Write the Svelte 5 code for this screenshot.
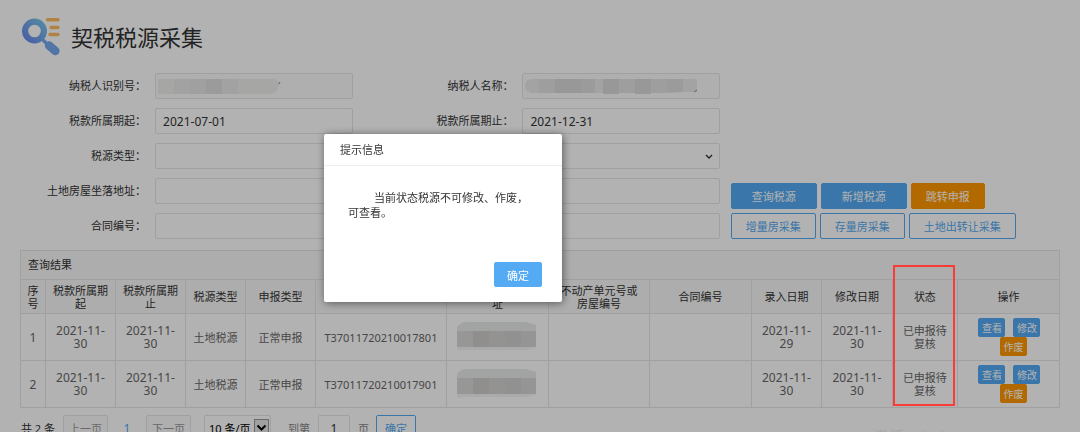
<script>
  let source = $state('');
  let address = $state('');
  let contract = $state('');
  let dateFrom = $state('2021-07-01');
  let dateTo = $state('2021-12-31');
  let pageSize = $state('10');
  let pageNo = $state('1');
  let showDialog = $state(true);

  const columns = [
    { name: '序号', width: 25 },
    { name: '税款所属期起', width: 70 },
    { name: '税款所属期止', width: 70 },
    { name: '税源类型', width: 60 },
    { name: '申报类型', width: 70 },
    { name: '税源编号', width: 131 },
    { name: '土地房屋坐落地址', width: 102, wide: true },
    { name: '不动产单元号或房屋编号', width: 101, wide: true },
    { name: '合同编号', width: 102 },
    { name: '录入日期', width: 70 },
    { name: '修改日期', width: 71 },
    { name: '状态', width: 65 },
    { name: '操作', width: 102 },
  ];
  const total = columns.reduce((sum, c) => sum + c.width, 0);

  const rows = [
    { id: 1, from: '2021-11-30', to: '2021-11-30', code: 'T37011720210017801', created: '2021-11-29', updated: '2021-11-30' },
    { id: 2, from: '2021-11-30', to: '2021-11-30', code: 'T37011720210017901', created: '2021-11-30', updated: '2021-11-30' },
  ];
</script>

<div class="page">
  <header>
    <svg width="38" height="38" viewBox="0 0 38 38" aria-hidden="true">
      <defs>
        <linearGradient id="lens" x1="0" y1="1" x2="1" y2="0">
          <stop offset="0" stop-color="#6a88ee" />
          <stop offset="1" stop-color="#78c4e8" />
        </linearGradient>
      </defs>
      <circle cx="12.5" cy="13" r="9.4" fill="none" stroke="url(#lens)" stroke-width="6.2" />
      <path d="M20 21l5 5" stroke="#74a8ec" stroke-width="3.4" />
      <path d="M27 27.5l6.4 5.5" stroke="#74a8ec" stroke-width="8.4" stroke-linecap="round" />
      <path d="M25.5 1.8H36M29 9.5h7M28 16.5h8" stroke="#fcbc62" stroke-width="3.4" stroke-linecap="round" />
    </svg>
    <h1>契税税源采集</h1>
  </header>

  <form class="query" onsubmit={(e) => e.preventDefault()}>
    <label for="taxNo">纳税人识别号：</label>
    <div class="field">
      <input id="taxNo" type="text" readonly />
      <svg class="mask" width="124" height="16" viewBox="0 0 124 16" aria-hidden="true">
        <path d="M0 0H116Q122 1 121 7Q119 15 112 15H0Z" fill="#eeeeec" />
        <path d="M16 0h16v15H16zM64 0h16v15H64z" fill="#e8e8e8" />
        <path d="M32 0h16v15H32z" fill="#e5e5e5" />
        <path d="M48 0h16v15H48z" fill="#dedede" />
        <path d="M121 5l1-2" stroke="#888" />
      </svg>
    </div>
    <label for="taxName">纳税人名称：</label>
    <div class="field">
      <input id="taxName" type="text" readonly />
      <svg class="mask" width="174" height="16" viewBox="0 0 174 16" aria-hidden="true">
        <path d="M6 0H172V13H160L148 14H6Q-1 12 0 7Q0 1 6 0Z" fill="#eaeaea" />
        <path d="M14 0h16v14H14zM94 0h16v14H94zM126 0h16v14h-16z" fill="#e3e3e3" />
        <path d="M30 0h26v14H30zM78 0h16v15H78zM110 0h16v15h-16z" fill="#dadada" />
        <path d="M56 0h14v14H56zM142 0h16v13h-16z" fill="#dfdfdf" />
        <path d="M169 13l3-2" stroke="#888" />
      </svg>
    </div>

    <label class="start" for="from">税款所属期起：</label>
    <div class="field"><input id="from" type="text" bind:value={dateFrom} /></div>
    <label for="to">税款所属期止：</label>
    <div class="field"><input id="to" type="text" bind:value={dateTo} /></div>

    <label class="start" for="source">税源类型：</label>
    <div class="field full">
      <select id="source" bind:value={source}>
        <option value=""></option>
        <option value="land">土地税源</option>
      </select>
      <svg class="arrow" width="8" height="6" viewBox="0 0 8 6" aria-hidden="true">
        <path d="M1 1l3 3 3-3" fill="none" stroke="#333" stroke-width="1.4" />
      </svg>
    </div>

    <label class="start" for="address">土地房屋坐落地址：</label>
    <div class="field full"><input id="address" type="text" bind:value={address} /></div>

    <label class="start" for="contract">合同编号：</label>
    <div class="field full"><input id="contract" type="text" bind:value={contract} /></div>

    <div class="actions">
      <div class="btn-row">
        <button class="btn wide">查询税源</button>
        <button class="btn wide">新增税源</button>
        <button class="btn orange">跳转申报</button>
      </div>
      <div class="btn-row">
        <button class="btn plain">增量房采集</button>
        <button class="btn plain">存量房采集</button>
        <button class="btn plain">土地出转让采集</button>
      </div>
    </div>
  </form>

  <section class="results">
    <h2>查询结果</h2>
    <table>
      <colgroup>
        {#each columns as col}
          <col style="width: {(col.width / total) * 100}%" />
        {/each}
      </colgroup>
      <thead>
        <tr>
          {#each columns as col}
            <th class:wide={col.wide}>{col.name}</th>
          {/each}
        </tr>
      </thead>
      <tbody>
        {#each rows as row}
          <tr>
            <td class="date">{row.id}</td>
            <td class="date">{row.from}</td>
            <td class="date">{row.to}</td>
            <td>土地税源</td>
            <td>正常申报</td>
            <td class="code">{row.code}</td>
            <td>
              <svg class="blur" width="82" height="30" viewBox="0 0 82 30" aria-hidden="true">
                <path d="M1 5Q5 0 10 0H70L80 3V25L72 28H8Q2 30 1 27Z" fill="#f4f4f4" />
                <path d="M1 9V5Q5 0 10 0H70L80 3V9Z" fill="#e9ebea" />
                <path d="M1 9h16v16H1z" fill="#d8d8d8" />
                <path d="M17 9h16v16H17z" fill="#cecdcb" />
                <path d="M33 9h16v16H33z" fill="#d3d3d2" />
                <path d="M49 9h16v16H49z" fill="#ced0cf" />
                <path d="M65 9h15v16H65z" fill="#d6d6d6" />
              </svg>
            </td>
            <td></td>
            <td></td>
            <td class="date">{row.created}</td>
            <td class="date">{row.updated}</td>
            <td>已申报待复核</td>
            <td>
              <div class="ops">
                <button class="mini">查看</button>
                <button class="mini">修改</button>
                <button class="mini orange">作废</button>
              </div>
            </td>
          </tr>
        {/each}
      </tbody>
    </table>
    <div class="mark"></div>
  </section>

  <nav class="pager">
    <span class="count">共 2 条</span>
    <button class="step" disabled>上一页</button>
    <a href="#1">1</a>
    <button class="step" disabled>下一页</button>
    <div class="size">
      <select aria-label="每页条数" bind:value={pageSize}>
        <option value="10">10 条/页</option>
        <option value="20">20 条/页</option>
      </select>
      <svg width="15" height="17" viewBox="0 0 15 17" aria-hidden="true">
        <rect x="0.5" y="0.5" width="14" height="16" fill="#e6e6e6" stroke="#999" />
        <path d="M3.5 6.5l4 4 4-4" fill="none" stroke="#000" stroke-width="2" />
      </svg>
    </div>
    <label for="pageNo">到第</label>
    <input id="pageNo" type="text" bind:value={pageNo} />
    <span class="unit">页</span>
    <button class="go">确定</button>
  </nav>

  <div class="watermark">激活 Windows</div>
</div>

{#if showDialog}
  <div class="shade"></div>
  <div class="dialog" role="dialog" aria-labelledby="dialogTitle">
    <h3 id="dialogTitle">提示信息</h3>
    <p>当前状态税源不可修改、作废，可查看。</p>
    <footer>
      <button class="ok" onclick={() => (showDialog = false)}>确定</button>
    </footer>
  </div>
{/if}

<style>
  :global(body) {
    background: #fff;
    font-family: 'Noto Sans', 'Noto Sans CJK SC', sans-serif;
    font-size: 11px;
    color: #333;
  }

  .page {
    position: relative;
    height: 100vh;
    overflow: hidden;
    box-sizing: border-box;
    padding: 16px 20px 0;
  }

  input, select, button {
    box-sizing: border-box;
    font-family: inherit;
    font-size: 11px;
    color: #333;
    margin: 0;
  }

  button {
    cursor: pointer;
    padding: 0;
    white-space: nowrap;
  }

  header {
    display: flex;
    align-items: center;
    gap: 11px;
    height: 42px;
    padding-left: 2px;
  }

  h1 {
    margin: 0;
    font-size: 22px;
    font-weight: 400;
    line-height: 42px;
  }

  .query {
    display: grid;
    grid-template-columns: 125fr 198fr 151fr 197fr 331fr;
    column-gap: 9px;
    row-gap: 9px;
    margin-top: 15px;
    padding-left: 1px;
  }

  .query label {
    line-height: 26px;
    text-align: right;
    white-space: nowrap;
  }

  .start {
    grid-column: 1;
  }

  .field {
    position: relative;
    height: 26px;
  }

  .full {
    grid-column: 2 / 5;
  }

  .field input, .field select {
    width: 100%;
    height: 26px;
    padding: 0 7px;
    border: 1px solid #e6e6e6;
    border-radius: 2px;
    background: #fff;
    font-size: 12px;
    appearance: none;
  }

  .field input[readonly] {
    background: #fbfbfb;
  }

  .mask {
    position: absolute;
    left: 3px;
    top: 6px;
  }

  .arrow {
    position: absolute;
    right: 7px;
    top: 11px;
    pointer-events: none;
  }

  .actions {
    grid-column: 5;
    grid-row: 4 / 6;
    align-self: end;
    display: flex;
    flex-direction: column;
    gap: 4px;
    padding-left: 2px;
  }

  .btn-row {
    display: flex;
    gap: 4px;
  }

  .btn {
    height: 26px;
    padding: 0 14px;
    border: 1px solid #54aaf3;
    border-radius: 2px;
    background: #54aaf3;
    color: #fff;
  }

  .btn.wide {
    padding: 0 20px;
  }

  .btn.plain {
    background: #fff;
    color: #54aaf3;
  }

  .btn.orange, .mini.orange {
    border-color: #ff9900;
    background: #ff9900;
  }

  .results {
    position: relative;
    margin-top: 11px;
  }

  h2 {
    margin: 0;
    padding: 0 7px;
    border: 1px solid #e6e6e6;
    border-bottom: none;
    background: #f8f8f8;
    font-size: 11px;
    font-weight: 400;
    line-height: 28px;
  }

  table {
    width: 100%;
    table-layout: fixed;
    border-collapse: collapse;
    line-height: 13px;
    text-align: center;
  }

  th, td {
    border: 1px solid #e6e6e6;
    padding: 0 5px;
    font-weight: 400;
  }

  th {
    height: 33px;
    background: #f8f8f8;
  }

  th.wide {
    padding: 0 9px;
  }

  td {
    height: 46px;
    color: #666;
  }

  td.date {
    font-size: 12px;
  }

  td.code {
    padding: 0;
  }

  .blur {
    display: block;
    margin: 0 auto;
  }

  .ops {
    display: flex;
    flex-wrap: wrap;
    justify-content: center;
    column-gap: 8px;
    padding: 0 10px 0 12px;
  }

  .mini {
    width: 27px;
    height: 19px;
    border: 1px solid #54aaf3;
    border-radius: 2px;
    background: #54aaf3;
    font-size: 10px;
    color: #fff;
  }

  .mini.orange {
    margin-left: 8px;
  }

  .mark {
    position: absolute;
    z-index: 3;
    left: 83.9%;
    top: 15px;
    bottom: 2px;
    width: 6%;
    box-sizing: border-box;
    border: 2px solid #fb3b37;
    pointer-events: none;
  }

  .pager {
    display: flex;
    align-items: center;
    height: 26px;
    margin-top: 7px;
    padding-left: 1px;
    white-space: nowrap;
  }

  .pager button, .pager input {
    height: 26px;
    border: 1px solid #e6e6e6;
    border-radius: 2px;
    background: #fff;
  }

  .pager .step {
    width: 45px;
    background: #fbfbfb;
    color: #999;
  }

  .count {
    width: 42px;
  }

  .pager a {
    width: 38px;
    text-align: center;
    text-decoration: none;
    font-size: 12px;
    color: #54aaf3;
  }

  .size {
    position: relative;
    width: 67px;
    margin: 0 17px 0 13px;
  }

  .size select {
    width: 100%;
    height: 26px;
    padding: 0 4px;
    border: 1px solid #e6e6e6;
    border-radius: 2px;
    background: #fff;
    font-size: 11px;
    color: #000;
    appearance: none;
  }

  .size svg {
    position: absolute;
    right: 2px;
    top: 4px;
    pointer-events: none;
  }

  .pager label, .unit {
    color: #888;
  }

  .pager input {
    width: 32px;
    margin: 0 8px;
    padding: 0;
    text-align: center;
    font-size: 12px;
  }

  .pager .go {
    width: 40px;
    margin-left: 7px;
    border-color: #54aaf3;
    color: #54aaf3;
  }

  .watermark {
    position: absolute;
    left: 81%;
    bottom: -12px;
    font-size: 15px;
    line-height: 16px;
    color: #eee;
  }

  .shade {
    position: fixed;
    z-index: 2;
    inset: 0;
    background: rgba(0, 0, 0, 0.3);
  }

  .dialog {
    position: fixed;
    z-index: 4;
    left: 30%;
    top: 134px;
    width: 238px;
    border-radius: 2px;
    background: #fff;
    box-shadow: 1px 1px 8px rgba(0, 0, 0, 0.5);
  }

  h3 {
    margin: 0;
    padding: 0 16px;
    border-bottom: 1px solid #eee;
    font-size: 11px;
    font-weight: 400;
    line-height: 31px;
  }

  .dialog p {
    margin: 0;
    min-height: 48px;
    padding: 24px 28px 24px 24px;
    line-height: 15px;
    text-indent: 26px;
  }

  .dialog footer {
    display: flex;
    justify-content: flex-end;
    padding: 0 20px 15px;
  }

  .ok {
    width: 48px;
    height: 25px;
    border: 1px solid #54aaf3;
    border-radius: 2px;
    background: #54aaf3;
    color: #fff;
  }
</style>
